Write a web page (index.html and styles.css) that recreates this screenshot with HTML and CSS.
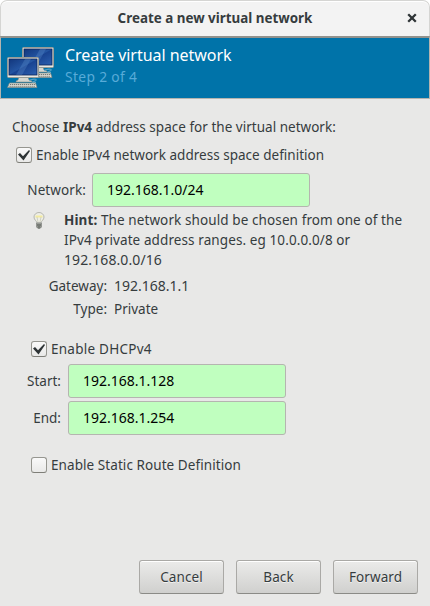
FILE: index.html
```
<!DOCTYPE html>
<html lang="en">
<head>
<meta charset="utf-8">
<title>Create a new virtual network</title>
<link rel="stylesheet" href="styles.css">
</head>
<body>
<div class="window">
  <header class="titlebar">
    <h1>Create a new virtual network</h1>
    <button class="close" aria-label="Close"><svg width="10" height="10" viewBox="0 0 10 10"><path d="M1.2 1.2 8.8 8.8M8.8 1.2 1.2 8.8" stroke="#2e3436" stroke-width="2.3"/></svg></button>
  </header>
  <section class="banner">
    <svg class="computers" width="48" height="48" viewBox="0 0 48 48">
      <defs>
        <linearGradient id="screen" x1="0" y1="0" x2="1" y2="1"><stop offset="0" stop-color="#12367c"/><stop offset=".48" stop-color="#2455a2"/><stop offset=".52" stop-color="#194391"/><stop offset="1" stop-color="#2c60b0"/></linearGradient>
        <g id="computer">
          <path d="M12 20h9l1 3 3 1v1H9v-1l2-1z" fill="#d5d6d0" stroke="#777c78" stroke-width=".5"/>
          <path d="M22 23.5c5-2.5 10-1 6 .5s-4 1.5 1 1.5" fill="none" stroke="#6bb0cf" stroke-width="1"/>
          <rect x=".5" y=".5" width="31" height="20" rx="1" fill="#e8e8e2" stroke="#999d96"/>
          <rect x="2" y="2" width="28" height="16" fill="url(#screen)" stroke="#0a2459" stroke-width=".8"/>
          <path d="M18 2h6L15 18H9z" fill="#6594d2" opacity=".3"/>
          <path d="M2.5 26h26l1.5 4.5H.5z" fill="#deded6" stroke="#858982" stroke-width=".7"/>
          <path d="M3 27.5h25M2.5 29.3h26" stroke="#777b76" stroke-width="1" stroke-dasharray="1.3 .7"/>
        </g>
      </defs>
      <use href="#computer" x="15" y="4"/>
      <use href="#computer" x="0" y="14"/>
    </svg>
    <div class="heading"><h2>Create virtual network</h2><p>Step 2 of 4</p></div>
  </section>
  <main>
    <p class="intro">Choose <b>IPv4</b> address space for the virtual network:</p>
    <label class="check ipv4"><span class="box"><svg width="12" height="11" viewBox="0 0 12 11"><path d="M0 4.5 2 3l3 3.3L11 0l1 1-6.5 9.5z" fill="#2e3436"/></svg></span><span class="enable-text">Enable IPv4 network address space definition</span></label>
    <div class="network-row"><span class="label">Network:</span><span class="entry"><span class="num">192.168.1.0/24</span></span></div>
    <div class="hint">
      <svg width="12" height="18" viewBox="0 0 12 18"><path d="M4 11C3.7 8.7 1 8 1 5a5 4.5 0 0 1 10 0c0 3-2.7 3.7-3 6z" fill="#eeeee6" stroke="#b4b5af"/><path d="M2.5 4.5h7" stroke="#f3eba0" stroke-width="2"/><path d="m4 5 1 5m3-5-1 5" stroke="#bcbda9" fill="none" stroke-width=".6"/><path d="M3.5 11h5v4L7 16.5H5L3.5 15z" fill="#aaaca7" stroke="#7c807b" stroke-width=".7"/><path d="M4 13h4M4.5 15h3" stroke="#454b45" stroke-width="1"/></svg>
      <p><span class="line"><b>Hint:</b> The network should be chosen from one of the</span><span class="line">IPv4 private address ranges. eg 10.0.0.0/8 or</span><span class="line num">192.168.0.0/16</span></p>
    </div>
    <dl>
      <dt>Gateway:</dt><dd class="num">192.168.1.1</dd>
      <dt>Type:</dt><dd>Private</dd>
    </dl>
    <label class="check dhcp"><span class="box"><svg width="12" height="11" viewBox="0 0 12 11"><path d="M0 4.5 2 3l3 3.3L11 0l1 1-6.5 9.5z" fill="#2e3436"/></svg></span><span class="dhcp-text">Enable DHCPv4</span></label>
    <div class="range">
      <span class="label">Start:</span><span class="entry"><span class="num">192.168.1.128</span></span>
      <span class="label">End:</span><span class="entry"><span class="num">192.168.1.254</span></span>
    </div>
    <label class="check static"><span class="box"></span><span class="static-text">Enable Static Route Definition</span></label>
  </main>
  <footer><button>Cancel</button><button>Back</button><button>Forward</button></footer>
</div>
</body>
</html>
```
FILE: styles.css
```
* { box-sizing: border-box; }
body { margin: 0; background: #fff; color: #363c3e; font: 13.5px/20px "Noto Sans", sans-serif; }
h1, h2, p, dl, dd { margin: 0; font-weight: 400; }
.window { width: 430px; height: 606px; display: flex; flex-direction: column; background: #e8e8e7; border-radius: 7px 7px 0 0; overflow: hidden; white-space: nowrap; }
.titlebar { height: 36px; flex: none; display: grid; grid-template-columns: 36px 1fr 36px; align-items: center; background: #f3f3f3; border: 1px solid #d5d5d3; border-bottom: 0; border-radius: 7px 7px 0 0; box-shadow: inset 0 1px #fff; }
.titlebar h1 { grid-column: 2; text-align: center; font-size: 13.4px; line-height: 20px; font-weight: 700; margin-bottom: 2px; }
.close { border: 0; padding: 0; height: 10px; background: none; display: grid; place-items: center; margin: 0 0 1px 1px; }
.banner { height: 63px; flex: none; display: flex; background: #0073a9; border: 1px solid #b4b4af; border-top: 2px solid #92928d; padding: 5px 0 0 6px; }
.computers { flex: none; }
.heading { padding: 1px 0 0 10px; }
.heading h2 { color: #fff; font-size: 16px; line-height: 22px; letter-spacing: -.03px; }
.heading p { color: #58abd8; font-size: 13.8px; letter-spacing: .35px; line-height: 22px; }
main { height: 451px; padding: 18px 0 0; display: flex; flex-direction: column; }
.intro { margin-left: 12px; height: 20px; letter-spacing: .02px; }
.check { display: flex; align-items: center; height: 20px; gap: 4px; }
.box { width: 16px; height: 16px; border: 1px solid #969690; border-bottom-color: #7e7e78; border-radius: 3px; background: linear-gradient(#f9f9f9, #e9e9e8); display: grid; place-items: center; }
.enable-text { letter-spacing: .02px; }
.dhcp-text { letter-spacing: .25px; }
.static-text { letter-spacing: .07px; }
.ipv4 { margin: 8px 0 0 16px; }
.network-row { margin-top: 8px; display: flex; align-items: center; gap: 6px; }
.label { text-align: right; }
.network-row .label { width: 86px; letter-spacing: .1px; }
.entry { width: 218px; height: 34px; padding: 6px 14px; border: 1px solid #b5b5b0; border-radius: 3px; background: #c0ffbf; color: #000; display: block; }
.num { font-size: 14px; }
.hint { margin: 3px 0 0 33px; display: flex; gap: 19px; }
.hint svg { margin-top: 2px; flex: none; }
.line { display: block; width: max-content; letter-spacing: .1px; }
dl { margin-top: 4px; display: grid; grid-template-columns: 107px auto; grid-template-rows: 24px 23px; column-gap: 7px; align-items: baseline; line-height: 23px; }
dt { text-align: right; }
.dhcp { margin: 18px 0 0 31px; }
.range { margin-top: 5px; display: grid; grid-template-columns: 61px 218px; gap: 3px 7px; align-items: center; }
.static { margin: 20px 0 0 31px; }
footer { display: flex; justify-content: flex-end; gap: 12px; padding: 10px 12px 0; }
footer button { width: 85px; height: 34px; padding: 0; border: 1px solid #aaa9a6; border-bottom-color: #8b8b87; border-radius: 3px; background: linear-gradient(#ebebea, #d0d0ce); box-shadow: inset 0 1px #fff; font: inherit; letter-spacing: .1px; color: inherit; text-shadow: 0 1px #f1f1f0; }
```
